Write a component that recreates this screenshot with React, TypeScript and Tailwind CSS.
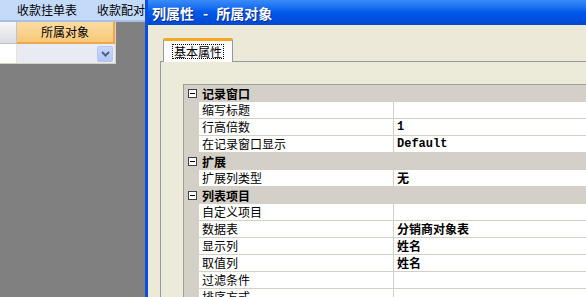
import React from "react";

type Row =
  | { kind: "cat"; label: string }
  | { kind: "prop"; label: string; value?: string; mono?: boolean };

const rows: Row[] = [
  { kind: "cat", label: "记录窗口" },
  { kind: "prop", label: "缩写标题" },
  { kind: "prop", label: "行高倍数", value: "1", mono: true },
  { kind: "prop", label: "在记录窗口显示", value: "Default", mono: true },
  { kind: "cat", label: "扩展" },
  { kind: "prop", label: "扩展列类型", value: "无" },
  { kind: "cat", label: "列表项目" },
  { kind: "prop", label: "自定义项目" },
  { kind: "prop", label: "数据表", value: "分销商对象表" },
  { kind: "prop", label: "显示列", value: "姓名" },
  { kind: "prop", label: "取值列", value: "姓名" },
  { kind: "prop", label: "过滤条件" },
  { kind: "prop", label: "排序方式" },
];

const cjk = "font-['SimSun','Noto_Sans_CJK_SC',sans-serif]";

function MinusBox() {
  return (
    <div className="w-[9px] h-[9px] border border-[#404040] bg-white flex items-center justify-center">
      <div className="w-[5px] h-[1px] bg-black" />
    </div>
  );
}

function PropRow({ row }: { row: Row }) {
  if (row.kind === "cat") {
    return (
      <div className="h-[17px] bg-[#d4d0c8] flex items-center">
        <div className="w-[15px] flex justify-center pl-[1px]">
          <MinusBox />
        </div>
        <span className="ml-[3px] text-[12px] leading-none font-bold text-black">{row.label}</span>
      </div>
    );
  }
  return (
    <div className="h-[17px] flex">
      <div className="w-[15px] bg-[#d4d0c8]" />
      <div className="flex flex-1 bg-white border-b border-[#d4d0c8]">
        <div className="w-[195px] pl-[3px] flex items-center text-[12px] leading-none text-black border-r border-[#d4d0c8]">
          {row.label}
        </div>
        <div
          className={`flex-1 pl-[3px] flex items-center text-[12px] leading-none font-bold text-black ${
            row.mono ? "font-['Liberation_Mono',monospace]" : ""
          }`}
        >
          {row.value}
        </div>
      </div>
    </div>
  );
}

export default function App() {
  return (
    <div className={`w-[586px] h-[297px] overflow-hidden flex bg-[#808080] ${cjk}`}>
      {/* left: host application behind the dialog */}
      <div className="w-[145px] shrink-0 flex flex-col overflow-hidden">
        <div className="h-[20px] bg-[#c4daf9] flex items-center text-[12px] leading-none text-black whitespace-nowrap overflow-hidden">
          <span className="ml-[17px] shrink-0">收款挂单表</span>
          <span className="ml-[20px] shrink-0">收款配对表</span>
        </div>
        <div className="h-[2px] bg-[#a9c0e2]" />
        <div className="w-[116px] flex flex-col border-r border-b border-[#d9d4c0]">
          <div className="h-[22px] flex">
            <div className="w-[17px] bg-gradient-to-b from-[#f7f7f9] to-[#dcdde4] border-r border-b border-[#bfc4d4]" />
            <div className="flex-1 bg-gradient-to-b from-[#fbdca2] to-[#f6c878] border-r-2 border-b-2 border-[#f0a64a] flex items-center justify-center text-[12px] leading-none text-black">
              所属对象
            </div>
          </div>
          <div className="h-[19px] flex">
            <div className="w-[17px] bg-white border-r border-[#ece4cc]" />
            <div className="flex-1 bg-[#e8eaf4] flex items-center justify-end pr-[2px]">
              <div className="w-[16px] h-[16px] rounded-[2px] bg-gradient-to-b from-[#c9d8fb] to-[#b2c6f6] border border-[#b7c9f3] flex items-center justify-center">
                <svg width="9" height="6" viewBox="0 0 9 6">
                  <path d="M1 1 L4.5 4.5 L8 1" stroke="#4d6185" strokeWidth="2" fill="none" />
                </svg>
              </div>
            </div>
          </div>
        </div>
      </div>

      {/* right: dialog window */}
      <div className="flex-1 flex flex-col border-l-[3px] border-[#0a4fe0] bg-[#ece9d8]">
        <div className="h-[25px] shrink-0 bg-gradient-to-b from-[#3a8cf8] via-[#0058ea] to-[#0049d4] flex items-center pl-[4px] text-white font-bold text-[14px] leading-none [text-shadow:1px_1px_0_#0a2a8a] whitespace-nowrap">
          <span>列属性</span>
          <span className="ml-[9px]">-</span>
          <span className="ml-[8px]">所属对象</span>
        </div>
        <div className="flex-1 flex flex-col pt-[13px] pl-[12px]">
          <div className="flex pl-[3px]">
            <div className="w-[70px] h-[24px] bg-[#fcfcfe] border-x border-[#919b9c] border-t-[3px] border-t-[#f5a623] rounded-t-[2px] flex items-center justify-center relative z-10 -mb-px">
              <div className="border border-dotted border-black px-[1px] h-[15px] flex items-center text-[12px] leading-none text-black">
                基本属性
              </div>
            </div>
          </div>
          <div className="flex-1 border-l border-t border-[#919b9c] bg-[#ecead9] pt-[22px] pl-[22px]">
            <div className="border-t border-l border-[#9d9d9d] bg-[#d4d0c8]">
              {rows.map((r, i) => (
                <PropRow key={i} row={r} />
              ))}
            </div>
          </div>
        </div>
      </div>
    </div>
  );
}
